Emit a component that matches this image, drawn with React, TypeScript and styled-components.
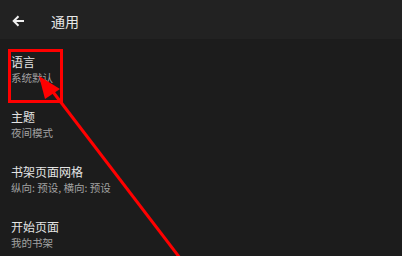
import React from "react";
import styled, { createGlobalStyle } from "styled-components";

const Global = createGlobalStyle`
  html, body { margin: 0; padding: 0; background: #1c1c1c; }
  body { font-family: "Noto Sans CJK SC", "Noto Sans", sans-serif; }
`;

const Page = styled.div`
  position: relative;
  width: 402px;
  height: 256px;
  overflow: hidden;
  background: #1c1c1c;
`;

const Toolbar = styled.header`
  height: 39px;
  background: #222222;
  display: flex;
  align-items: center;
  padding-left: 11px;
  gap: 26px;
  box-sizing: border-box;
`;

const BackButton = styled.span`
  width: 14px;
  height: 14px;
  display: flex;
  align-items: center;
  justify-content: center;
  margin-top: 2px;
`;

const Title = styled.h1`
  margin: 0;
  font-size: 14px;
  font-weight: 400;
  line-height: 18px;
  color: #e8e8e8;
  margin-top: 2px;
`;

const List = styled.ul`
  list-style: none;
  margin: 0;
  padding: 0;
`;

const Row = styled.li`
  height: 55px;
  box-sizing: border-box;
  padding: 15px 11px 0;
  display: flex;
  flex-direction: column;
`;

const RowTitle = styled.span`
  font-size: 12px;
  line-height: 16px;
  color: #e4e4e4;
`;

const RowSub = styled.span`
  font-size: 10.5px;
  line-height: 15px;
  color: #a2a2a2;
`;

const Annotation = styled.svg`
  position: absolute;
  left: 0;
  top: 0;
  pointer-events: none;
`;

const items = [
  { title: "语言", sub: "系统默认" },
  { title: "主题", sub: "夜间模式" },
  { title: "书架页面网格", sub: "纵向: 预设, 横向: 预设" },
  { title: "开始页面", sub: "我的书架" },
];

export default function App() {
  return (
    <>
      <Global />
      <Page>
        <Toolbar>
          <BackButton>
            <svg width="13" height="12" viewBox="0 0 13 12">
              <path
                d="M12 6H2M6.5 1.2L1.7 6l4.8 4.8"
                fill="none"
                stroke="#f0f0f0"
                strokeWidth="2"
              />
            </svg>
          </BackButton>
          <Title>通用</Title>
        </Toolbar>
        <List>
          {items.map((it) => (
            <Row key={it.title}>
              <RowTitle>{it.title}</RowTitle>
              <RowSub>{it.sub}</RowSub>
            </Row>
          ))}
        </List>
        <Annotation width="402" height="256" viewBox="0 0 402 256">
          <rect x="9.5" y="50.5" width="52" height="51" fill="none" stroke="#ff0000" strokeWidth="3" />
          <line x1="183" y1="262" x2="50" y2="88" stroke="#ff0000" strokeWidth="3" />
          <polygon points="39,76 60,89 45,99" fill="#ff0000" />
        </Annotation>
      </Page>
    </>
  );
}
